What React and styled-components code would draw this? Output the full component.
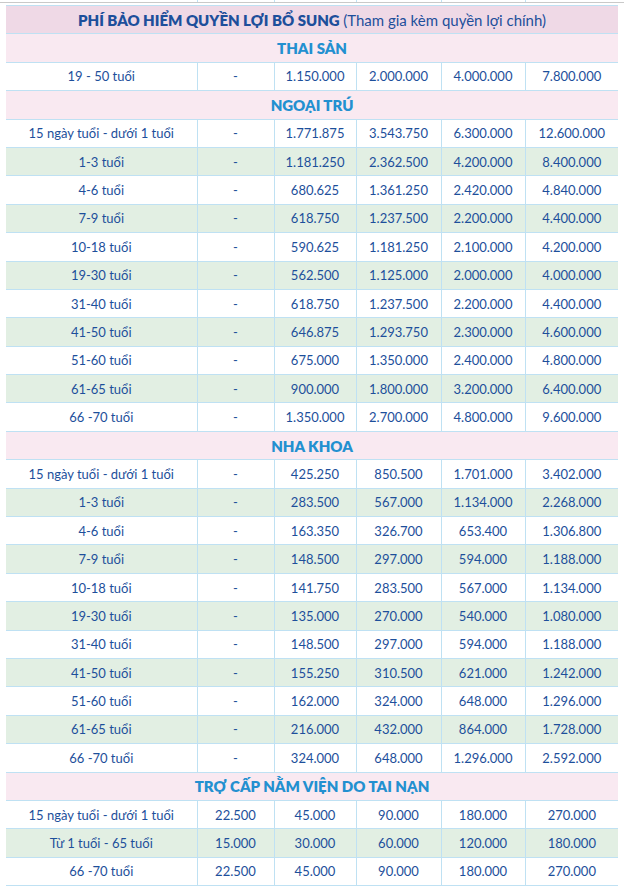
import React from "react";
import styled, { createGlobalStyle } from "styled-components";

const Global = createGlobalStyle`
  html, body { margin: 0; padding: 0; background: #ffffff; }
  body { font-family: Lato, "Noto Sans", sans-serif; }
`;

const COLS = "191px 77px 82px 85px 84px 93px";

const Page = styled.div`
  width: 624px;
  padding: 0 6px;
  box-sizing: border-box;
`;

const Stubs = styled.div`
  display: grid;
  grid-template-columns: ${COLS};
  height: 2px;
`;

const Stub = styled.div`
  border-left: ${(p) => (p.$first ? "none" : "1px solid #bfe1f3")};
`;

const PageBreak = styled.div`
  height: 1px;
  margin: 0 -6px 2px;
  background: #c9c9c9;
`;

const Table = styled.table`
  width: 612px;
  border-collapse: collapse;
  table-layout: fixed;
  color: #1d4f9b;
`;

const Row = styled.tr`
  height: 28.4px;
  background: ${(p) => (p.$green ? "#e2efe3" : "#ffffff")};
  border-top: 1px solid #bfe1f3;
  border-bottom: 1px solid #bfe1f3;
`;

const Cell = styled.td`
  padding: 0;
  text-align: center;
  vertical-align: middle;
  font-size: 13px;
  border-left: 1px solid #bfe1f3;
  white-space: nowrap;
  &:first-child { border-left: none; }
`;

const TitleRow = styled.tr`
  height: 28.4px;
  background: ${(p) => (p.$main ? "#efd9e6" : "#f9e9f1")};
  border-top: 1px solid #bfe1f3;
  border-bottom: 1px solid #bfe1f3;
`;

const TitleCell = styled.td`
  padding: 0;
  text-align: center;
  vertical-align: middle;
  font-size: 15px;
  font-weight: 800;
  color: ${(p) => (p.$main ? "#1d4f9b" : "#2390d0")};
  white-space: nowrap;
`;

const Note = styled.span`
  font-weight: 400;
`;

const sections = [
  {
    title: "THAI SẢN",
    rows: [["19 - 50 tuổi", "-", "1.150.000", "2.000.000", "4.000.000", "7.800.000"]],
    striped: false,
  },
  {
    title: "NGOẠI TRÚ",
    striped: true,
    rows: [
      ["15 ngày tuổi - dưới 1 tuổi", "-", "1.771.875", "3.543.750", "6.300.000", "12.600.000"],
      ["1-3 tuổi", "-", "1.181.250", "2.362.500", "4.200.000", "8.400.000"],
      ["4-6 tuổi", "-", "680.625", "1.361.250", "2.420.000", "4.840.000"],
      ["7-9 tuổi", "-", "618.750", "1.237.500", "2.200.000", "4.400.000"],
      ["10-18 tuổi", "-", "590.625", "1.181.250", "2.100.000", "4.200.000"],
      ["19-30 tuổi", "-", "562.500", "1.125.000", "2.000.000", "4.000.000"],
      ["31-40 tuổi", "-", "618.750", "1.237.500", "2.200.000", "4.400.000"],
      ["41-50 tuổi", "-", "646.875", "1.293.750", "2.300.000", "4.600.000"],
      ["51-60 tuổi", "-", "675.000", "1.350.000", "2.400.000", "4.800.000"],
      ["61-65 tuổi", "-", "900.000", "1.800.000", "3.200.000", "6.400.000"],
      ["66 -70 tuổi", "-", "1.350.000", "2.700.000", "4.800.000", "9.600.000"],
    ],
  },
  {
    title: "NHA KHOA",
    striped: true,
    rows: [
      ["15 ngày tuổi - dưới 1 tuổi", "-", "425.250", "850.500", "1.701.000", "3.402.000"],
      ["1-3 tuổi", "-", "283.500", "567.000", "1.134.000", "2.268.000"],
      ["4-6 tuổi", "-", "163.350", "326.700", "653.400", "1.306.800"],
      ["7-9 tuổi", "-", "148.500", "297.000", "594.000", "1.188.000"],
      ["10-18 tuổi", "-", "141.750", "283.500", "567.000", "1.134.000"],
      ["19-30 tuổi", "-", "135.000", "270.000", "540.000", "1.080.000"],
      ["31-40 tuổi", "-", "148.500", "297.000", "594.000", "1.188.000"],
      ["41-50 tuổi", "-", "155.250", "310.500", "621.000", "1.242.000"],
      ["51-60 tuổi", "-", "162.000", "324.000", "648.000", "1.296.000"],
      ["61-65 tuổi", "-", "216.000", "432.000", "864.000", "1.728.000"],
      ["66 -70 tuổi", "-", "324.000", "648.000", "1.296.000", "2.592.000"],
    ],
  },
  {
    title: "TRỢ CẤP NẰM VIỆN DO TAI NẠN",
    striped: true,
    rows: [
      ["15 ngày tuổi - dưới 1 tuổi", "22.500", "45.000", "90.000", "180.000", "270.000"],
      ["Từ 1 tuổi - 65 tuổi", "15.000", "30.000", "60.000", "120.000", "180.000"],
      ["66 -70 tuổi", "22.500", "45.000", "90.000", "180.000", "270.000"],
    ],
  },
];

export default function App() {
  return (
    <Page>
      <Global />
      <Stubs>
        {[0, 1, 2, 3, 4, 5].map((i) => (
          <Stub key={i} $first={i === 0} />
        ))}
      </Stubs>
      <PageBreak />
      <Table>
        <colgroup>
          <col style={{ width: 191 }} />
          <col style={{ width: 77 }} />
          <col style={{ width: 82 }} />
          <col style={{ width: 85 }} />
          <col style={{ width: 84 }} />
          <col style={{ width: 93 }} />
        </colgroup>
        <tbody>
          <TitleRow $main>
            <TitleCell $main colSpan={6}>
              PHÍ BẢO HIỂM QUYỀN LỢI BỔ SUNG <Note>(Tham gia kèm quyền lợi chính)</Note>
            </TitleCell>
          </TitleRow>
          {sections.map((s) => (
            <React.Fragment key={s.title}>
              <TitleRow>
                <TitleCell colSpan={6}>{s.title}</TitleCell>
              </TitleRow>
              {s.rows.map((r, i) => (
                <Row key={i} $green={s.striped && i % 2 === 1}>
                  {r.map((c, j) => (
                    <Cell key={j}>{c}</Cell>
                  ))}
                </Row>
              ))}
            </React.Fragment>
          ))}
        </tbody>
      </Table>
    </Page>
  );
}
